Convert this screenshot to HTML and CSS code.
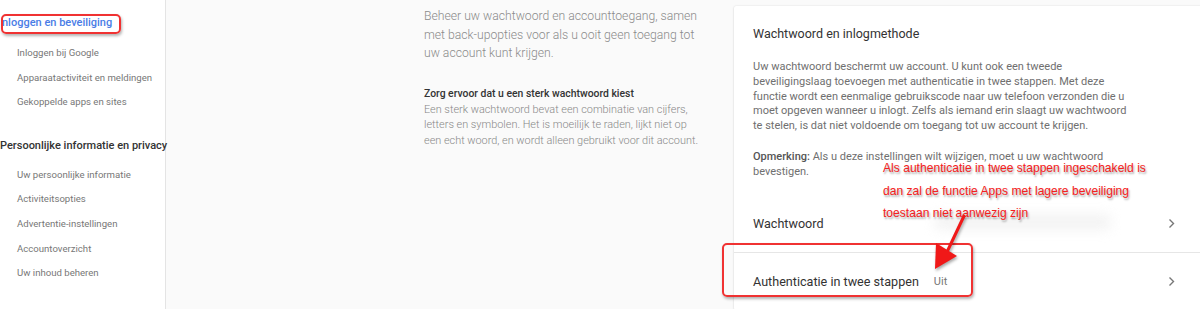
FILE: index.html
```html
<!DOCTYPE html>
<html lang="nl">
<head>
    <meta charset="UTF-8">
    <title>Inloggen en beveiliging</title>
    <link rel="stylesheet" href="styles.css">
</head>
<body>
    <nav class="sidebar">
        <div class="nav-head active">nloggen en beveiliging</div>
        <ul class="nav-list">
            <li>Inloggen bij Google</li>
            <li>Apparaatactiviteit en meldingen</li>
            <li>Gekoppelde apps en sites</li>
        </ul>
        <div class="nav-head second">Persoonlijke informatie en privacy</div>
        <ul class="nav-list">
            <li>Uw persoonlijke informatie</li>
            <li>Activiteitsopties</li>
            <li>Advertentie-instellingen</li>
            <li>Accountoverzicht</li>
            <li>Uw inhoud beheren</li>
        </ul>
    </nav>

    <main class="content">
        <section class="intro">
            <p class="lead">Beheer uw wachtwoord en accounttoegang, samen<br>met back-upopties voor als u ooit geen toegang tot<br>uw account kunt krijgen.</p>
            <h3>Zorg ervoor dat u een sterk wachtwoord kiest</h3>
            <p class="tip">Een sterk wachtwoord bevat een combinatie van cijfers,<br>letters en symbolen. Het is moeilijk te raden, lijkt niet op<br>een echt woord, en wordt alleen gebruikt voor dit account.</p>
        </section>

        <section class="card">
            <div class="card-body">
                <h2>Wachtwoord en inlogmethode</h2>
                <p>Uw wachtwoord beschermt uw account. U kunt ook een tweede<br>beveiligingslaag toevoegen met authenticatie in twee stappen. Met deze<br>functie wordt een eenmalige gebruikscode naar uw telefoon verzonden die u<br>moet opgeven wanneer u inlogt. Zelfs als iemand erin slaagt uw wachtwoord<br>te stelen, is dat niet voldoende om toegang tot uw account te krijgen.</p>
                <p class="note"><b>Opmerking:</b> Als u deze instellingen wilt wijzigen, moet u uw wachtwoord<br>bevestigen.</p>
            </div>
            <div class="row">
                <span class="row-label">Wachtwoord</span>
                <svg class="chev" width="7" height="11" viewBox="0 0 7 11"><polyline points="1.5,1.5 5.5,5.5 1.5,9.5" fill="none" stroke="#777" stroke-width="1.4"/></svg>
            </div>
            <div class="row">
                <span class="row-label">Authenticatie in twee stappen</span>
                <span class="row-value">Uit</span>
                <svg class="chev" width="7" height="11" viewBox="0 0 7 11"><polyline points="1.5,1.5 5.5,5.5 1.5,9.5" fill="none" stroke="#777" stroke-width="1.4"/></svg>
            </div>
        </section>
    </main>

    <!-- annotaties -->
    <div class="mark mark-nav"></div>
    <div class="mark mark-row"></div>
    <div class="smudge"></div>
    <div class="note-red">Als authenticatie in twee stappen ingeschakeld is<br>dan zal de functie Apps met lagere beveiliging<br>toestaan niet aanwezig zijn</div>
    <svg class="arrow" width="60" height="70" viewBox="0 0 60 70">
        <line x1="44" y1="4" x2="27" y2="40" stroke="#f01818" stroke-width="3" stroke-linecap="round"/>
        <polygon points="15,57 16,31 37,44" fill="#f01818"/>
    </svg>
</body>
</html>
```

FILE: styles.css
```css
body{
    margin: 0;
    height: 309px;
    overflow: hidden;
    display: flex;
    position: relative;
    background-color: #fafafa;
    font-family: Roboto, "Liberation Sans", sans-serif;
}
.sidebar{
    width: 165px;
    flex-shrink: 0;
    background-color: white;
    border-right: 1px solid #e4e4e4;
    padding-top: 14px;
}
.nav-head{
    font-size: 11px;
    font-weight: 500;
    line-height: 18px;
    color: #333;
    white-space: nowrap;
}
.nav-head.active{
    color: #4a7de6;
    padding-left: 2px;
}
.nav-head.second{
    margin-top: 22px;
}
.nav-list{
    list-style: none;
    margin: 9px 0 0 0;
    padding: 0 0 0 17px;
}
.nav-head.second + .nav-list{
    margin-top: 8px;
}
.nav-list li{
    font-size: 9.6px;
    line-height: 24.6px;
    color: #777;
    white-space: nowrap;
}

.content{
    flex: 1;
    display: grid;
    grid-template-columns: 290px 480px;
    column-gap: 20px;
    padding-left: 258px;
    align-items: start;
}
.intro{
    padding-top: 7px;
    white-space: nowrap;
}
.lead{
    margin: 0;
    font-size: 12.2px;
    font-weight: 300;
    line-height: 18.5px;
    color: #8a8a8a;
}
.intro h3{
    margin: 23px 0 0 0;
    font-size: 10.4px;
    font-weight: 500;
    line-height: 16px;
    color: #333;
}
.tip{
    margin: 0;
    font-size: 10.9px;
    font-weight: 300;
    line-height: 15.5px;
    color: #888;
}

.card{
    margin-top: 6px;
    background-color: white;
    box-shadow: 0 0 2px rgba(0,0,0,0.12), 0 1px 2px rgba(0,0,0,0.1);
    border-radius: 2px;
}
.card-body{
    padding: 17px 20px 0 19px;
    white-space: nowrap;
}
.card h2{
    margin: 0;
    font-size: 12.5px;
    font-weight: 400;
    line-height: 22px;
    color: #333;
}
.card-body p{
    margin: 15px 0 0 0;
    font-size: 11px;
    line-height: 14.8px;
    color: #6f6f6f;
}
.card-body p.note{
    margin-top: 15px;
    line-height: 15.5px;
}
.note b{
    font-weight: 500;
    color: #555;
}
.row{
    display: flex;
    align-items: center;
    height: 57px;
    padding: 0 39px 0 19px;
}
.row + .row{
    border-top: 1px solid #e6e6e6;
}
.card-body + .row{
    margin-top: 15px;
}
.row-label{
    font-size: 12.6px;
    color: #333;
}
.row-value{
    margin-left: 15px;
    font-size: 11px;
    color: #777;
}
.chev{
    margin-left: auto;
}

/* annotaties */
.mark{
    position: absolute;
    border: 2px solid #f03232;
    border-radius: 5px;
    box-shadow: 1px 2px 3px rgba(0,0,0,0.3);
}
.mark-nav{
    left: 1px;
    top: 14px;
    width: 116px;
    height: 16px;
}
.mark-row{
    left: 722px;
    top: 243px;
    width: 247px;
    height: 50px;
}
.note-red{
    position: absolute;
    left: 883px;
    top: 157px;
    font-family: "Liberation Sans", Arial, sans-serif;
    font-size: 12.1px;
    line-height: 22.5px;
    color: #f52020;
    text-shadow: 1px 2px 2px rgba(0,0,0,0.35);
    white-space: nowrap;
}
.arrow{
    position: absolute;
    left: 920px;
    top: 212px;
    filter: drop-shadow(1px 2px 1.5px rgba(0,0,0,0.35));
}
.smudge{
    position: absolute;
    left: 935px;
    top: 214px;
    width: 175px;
    height: 16px;
    background-color: #ececec;
    filter: blur(6px);
    opacity: 0.6;
}
```
